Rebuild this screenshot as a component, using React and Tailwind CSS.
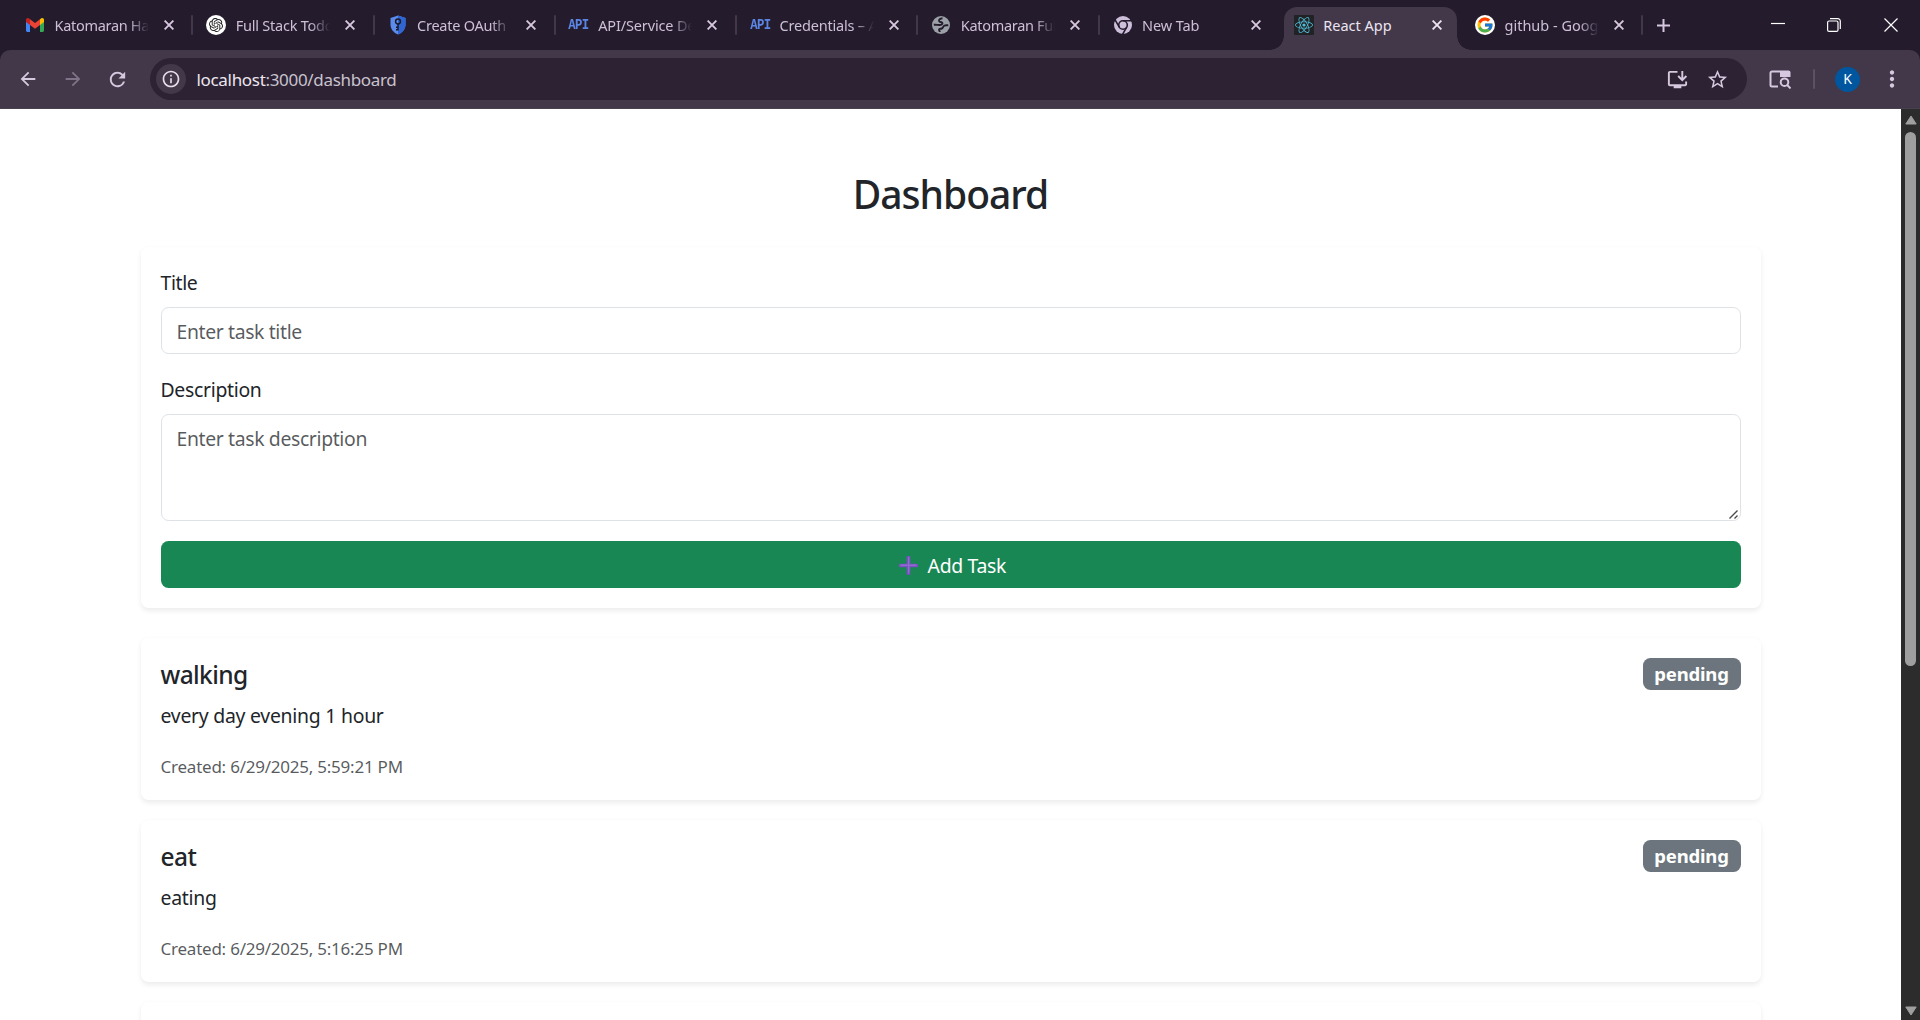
import { FaReact } from 'react-icons/fa';
import { FcGoogle } from 'react-icons/fc';
import {
  MdArrowBack,
  MdArrowForward,
  MdInfoOutline,
  MdInstallDesktop,
  MdMoreVert,
  MdRefresh,
  MdStarOutline,
} from 'react-icons/md';
import { SiOpenai } from 'react-icons/si';

function GmailIcon() {
  return (
    <svg viewBox="0 0 18 14" className="h-[14px] w-[18px]">
      <path d="M0 2v10.6C0 13.4.6 14 1.3 14H4V4.5z" fill="#4285f4" />
      <path d="M18 2v10.6c0 .8-.6 1.4-1.3 1.4H14V4.5z" fill="#34a853" />
      <path d="M14 1.3V7l4-3V1.9C18 .2 16.3-.5 15 .5z" fill="#fbbc04" />
      <path d="M4 7V1.3L9 5l5-3.7V7L9 10.8z" fill="#ea4335" />
      <path d="M0 1.9V4l4 3V1.3L3 .5C1.700-.5 0 .2 0 1.900z" fill="#c5221f" />
    </svg>
  );
}

function OpenAiIcon() {
  return (
    <span className="flex size-5 items-center justify-center rounded-full bg-white">
      <SiOpenai className="size-[14px] text-[#1c1c1c]" />
    </span>
  );
}

function ShieldIcon() {
  return (
    <svg viewBox="0 0 16 20" className="h-5 w-4">
      <path d="M8 .5 15.500 3v6.500c0 4.700-3.200 8.400-7.500 10C3.700 17.900.5 14.200.5 9.500V3z" fill="#5b8cec" />
      <path d="M8 .5 15.500 3v6.500c0 4.700-3.200 8.400-7.500 10z" fill="#2f66d3" />
      <circle cx="8" cy="6.500" r="2.400" fill="none" stroke="#1b1b2b" strokeWidth="1.500" />
      <path d="M8 9v6.500M8 12.200h-2M8 14.800h-2" stroke="#1b1b2b" strokeWidth="1.500" fill="none" />
    </svg>
  );
}

function ApiIcon() {
  return (
    <span className="mt-[2px] scale-x-[0.82] font-['Liberation_Mono',monospace] text-[15px] leading-5 font-bold tracking-[-0.8px] text-[#5b86e5]">
      API
    </span>
  );
}

function GlobeIcon() {
  return (
    <svg viewBox="0 0 18 18" className="size-[18px]">
      <circle cx="9" cy="9" r="9" fill="#9aa0a6" />
      <path
        d="M10.500 2.200C8 2.600 6.500 3.800 7.200 5.200c.6 1.100 2.800.6 3.200 1.900.4 1.300-1.300 1.900-2.800 1.900-2 0-4-.5-5.800-.2M16.300 9.300c-1.500.1-2.900-.3-4.100.4-1.300.8-1 2.300-2.400 2.800-1.300.5-2.300.1-2.700 1-.4.900.8 1.300.7 2.500"
        fill="none"
        stroke="#241b2d"
        strokeWidth="1.900"
      />
    </svg>
  );
}

function ChromeIcon() {
  return (
    <svg viewBox="0 0 18 18" className="size-[18px]">
      <circle cx="9" cy="9" r="9" fill="#cdbfd9" />
      <circle cx="9" cy="9" r="4.300" fill="none" stroke="#241b2d" strokeWidth="1.600" />
      <path d="M9 4.700h9M5.300 11.200.8 3.400M12.700 11.200 8.200 19" stroke="#241b2d" strokeWidth="1.600" />
    </svg>
  );
}

function ReactIcon() {
  return (
    <span className="flex size-5 items-center justify-center rounded-[1px] bg-[#212226]">
      <FaReact className="size-[18px] text-[#50bcd6]" />
    </span>
  );
}

function GoogleIcon() {
  return (
    <span className="flex size-5 items-center justify-center rounded-full bg-white">
      <FcGoogle className="size-[18px]" />
    </span>
  );
}

const tabs = [
  { title: 'Katomaran Ha', icon: GmailIcon, tracking: 'tracking-[-0.3px]' },
  { title: 'Full Stack Todo', icon: OpenAiIcon, tracking: 'tracking-[-0.23px]' },
  { title: 'Create OAuth', icon: ShieldIcon, tracking: 'tracking-[-0.23px]' },
  { title: 'API/Service De', icon: ApiIcon, tracking: 'tracking-[-0.15px]' },
  { title: 'Credentials – A', icon: ApiIcon, tracking: 'tracking-[-0.2px]' },
  { title: 'Katomaran Ful', icon: GlobeIcon, tracking: 'tracking-[-0.3px]' },
  { title: 'New Tab', icon: ChromeIcon, tracking: 'tracking-[-0.1px]', divider: false },
  { title: 'React App', icon: ReactIcon, tracking: 'tracking-[0px]', divider: false, active: true },
  { title: 'github - Goog', icon: GoogleIcon, tracking: 'tracking-[0px]' },
];

function Tab({ title, icon: Icon, tracking, divider = true, active = false }) {
  return (
    <div className="relative flex h-[50px] w-[181.25px] shrink-0 items-center">
      {active && (
        <div className="absolute top-[7px] right-[4px] bottom-0 left-[4.5px] rounded-t-[13px] bg-[#42384a]">
          <div className="absolute bottom-0 -left-[14px] size-[14px] bg-[radial-gradient(circle_at_0_0,transparent_13.5px,#42384a_14px)]" />
          <div className="absolute -right-[14px] bottom-0 size-[14px] bg-[radial-gradient(circle_at_100%_0,transparent_13.5px,#42384a_14px)]" />
        </div>
      )}
      <div className="relative ml-[14px] flex w-5 justify-center">
        <Icon />
      </div>
      <div
        className={`relative ml-[9.500px] w-[94px] overflow-hidden text-[14.5px] leading-5 whitespace-nowrap mask-[linear-gradient(to_right,black_74px,transparent_94px)] ${tracking} ${active ? 'mask-none text-[#ece4f0]' : 'text-[#cdbfd6]'}`}
      >
        {title}
      </div>
      <svg viewBox="0 0 10 10" className="relative ml-[15px] size-[10px]">
        <path d="M.6.6 9.400 9.400M9.400.6.6 9.400" stroke={active ? '#ece4f0' : '#d6c8de'} strokeWidth="1.900" />
      </svg>
      {divider && <div className="mr-[-1px] ml-auto h-5 w-[2px] rounded-full bg-[#42384a]" />}
    </div>
  );
}

function TabStrip() {
  return (
    <div className="flex h-[50px] items-center pl-[11px] font-['Noto_Sans',sans-serif]">
      {tabs.map((tab, i) => (
        <Tab key={i} {...tab} />
      ))}
      <svg viewBox="0 0 13 13" className="ml-[14.500px] size-[13px]">
        <path d="M6.500 0v13M0 6.500h13" stroke="#d6c8de" strokeWidth="2" />
      </svg>
      <div className="ml-auto flex h-full items-center text-white">
        <div className="flex w-14 justify-center">
          <svg viewBox="0 0 14 14" className="size-[14px]">
            <path d="M0 5.500h14" stroke="currentColor" strokeWidth="1.200" />
          </svg>
        </div>
        <div className="flex w-14 justify-center">
          <svg viewBox="0 0 14 14" className="size-[14px]" fill="none" stroke="currentColor">
            <rect x=".6" y="3" width="10.400" height="10.400" rx="1.500" strokeWidth="1.200" />
            <path d="M3 .7h7.800a2.500 2.500 0 0 1 2.500 2.500V11" strokeWidth="1.200" />
          </svg>
        </div>
        <div className="flex w-[58px] justify-center">
          <svg viewBox="0 0 14 14" className="size-[14px]">
            <path d="M.5.5l13 13M13.500.5l-13 13" stroke="currentColor" strokeWidth="1.200" />
          </svg>
        </div>
      </div>
    </div>
  );
}

function Toolbar() {
  return (
    <div className="flex h-[59px] items-center rounded-t-[10px] border-b border-[#4a4150] bg-[#42384a] pl-[5px] font-['Noto_Sans',sans-serif] text-[#d6c8de]">
      <div className="flex w-[45px] justify-center">
        <MdArrowBack className="size-[22px]" />
      </div>
      <div className="flex w-[45px] justify-center">
        <MdArrowForward className="size-[22px] text-[#7f7388]" />
      </div>
      <div className="flex w-[45px] justify-center">
        <MdRefresh className="size-[23px]" />
      </div>
      <div className="ml-[10px] flex h-[42px] w-[1597px] items-center rounded-full bg-[#2c2233] pl-[6px]">
        <div className="flex size-[30px] items-center justify-center rounded-full bg-[#42384a]">
          <MdInfoOutline className="size-5 text-[#e6dfea]" />
        </div>
        <div className="mt-[2px] ml-[10.500px] text-[17px] leading-6 tracking-[-0.32px] text-[#c9c2ce]">
          <span className="text-[#ece6ef]">localhost</span>:3000/dashboard
        </div>
        <MdInstallDesktop className="ml-auto size-[23px]" />
        <MdStarOutline className="mr-[18.500px] ml-[17px] size-[23px]" />
      </div>
      <div className="flex w-[66px] justify-center">
        <svg viewBox="0 0 22 19" className="h-[19px] w-[22px]" fill="none" stroke="currentColor" strokeWidth="2">
          <path d="M9 16.500H3A1.500 1.500 0 0 1 1.500 15V3A1.500 1.500 0 0 1 3 1.500h8" />
          <path d="M11 .5h8.500a2 2 0 0 1 2 2V7H11z" fill="currentColor" stroke="none" />
          <circle cx="15.500" cy="12.200" r="3.800" />
          <path d="m18.200 15 3.400 3.400" />
        </svg>
      </div>
      <div className="h-5 w-[2px] rounded-full bg-[#5b5064]" />
      <div className="flex w-[65px] justify-center">
        <div className="flex size-[25px] items-center justify-center rounded-full bg-[#00579f] text-[14px] leading-none text-white">
          K
        </div>
      </div>
      <div className="flex w-6 justify-center">
        <MdMoreVert className="size-[26px] shrink-0" />
      </div>
    </div>
  );
}

function Card({ className = '', children }) {
  return (
    <section className={`rounded-[7.500px] bg-white p-5 shadow-[0_2.500px_5px_rgba(0,0,0,0.075)] ${className}`}>
      {children}
    </section>
  );
}

function TaskForm() {
  return (
    <Card className="h-[361px]">
      <label className="block h-[30px] leading-[31px]">
        <span className="tracking-[-0.38px]">Title</span>
      </label>
      <input
        type="text"
        placeholder="Enter task title"
        className="mt-[10px] block h-[47px] w-full rounded-[7.500px] border border-[#dee2e6] px-[15px] pt-[2px] tracking-[-0.37px] placeholder:text-[#212529bf]"
      />
      <label className="mt-5 block h-[30px] leading-[31px] tracking-[-0.3px]">Description</label>
      <div className="relative mt-[10px]">
        <textarea
          placeholder="Enter task description"
          className="block h-[107px] w-full resize-none rounded-[7.500px] border border-[#dee2e6] px-[15px] py-[8.500px] leading-[30px] tracking-[-0.36px] placeholder:text-[#212529bf]"
        />
        <svg viewBox="0 0 9 9" className="absolute right-[3px] bottom-[2px] size-[9px]">
          <path d="M.5 8.500l8-8M5.500 8.500l3-3" stroke="#4a4a4a" strokeWidth="1.400" strokeDasharray="none" />
        </svg>
      </div>
      <button className="mt-5 flex h-[47px] w-full items-center justify-center rounded-[7.500px] bg-[#198754] pt-[2px] pl-1 text-white">
        <svg viewBox="0 0 19 19" className="size-[19px]">
          <path d="M9.500 1.500v16M1.500 9.500h16" stroke="#7b4fc4" strokeWidth="3.600" strokeLinecap="round" />
          <path d="M9.700 1.800v15M1.800 9.200h15" stroke="#8f6bd0" strokeWidth="1.400" strokeLinecap="round" />
        </svg>
        <span className="ml-[9.500px] pt-px tracking-[-0.34px]">Add Task</span>
      </button>
    </Card>
  );
}

const tasks = [
  { title: 'walking', description: 'every day evening 1 hour', created: '6/29/2025, 5:59:21 PM', status: 'pending' },
  { title: 'eat', description: 'eating', created: '6/29/2025, 5:16:25 PM', status: 'pending' },
];

function TaskCard({ title, description, created, status }) {
  return (
    <Card className="h-[162px]">
      <div className="flex h-8 items-end justify-between">
        <h5 className="text-[24.5px] leading-[30px] font-[550] tracking-[-0.6px]">{title}</h5>
        <span className="flex h-8 w-[98px] items-center justify-center rounded-[7.500px] bg-[#6c757d] text-[18.5px] leading-none font-bold tracking-[-0.2px] text-white">
          {status}
        </span>
      </div>
      <p className="mt-[10px] h-[30px] leading-[31px] tracking-[-0.25px]">{description}</p>
      <p className="mt-5 h-[30px] text-[17px] leading-[33px] tracking-[-0.23px] text-[#212529bf]">Created: {created}</p>
    </Card>
  );
}

function Scrollbar() {
  return (
    <div className="flex w-[19px] shrink-0 flex-col items-center bg-[#2c2c2c] pt-[6px] pb-[4px] text-[#9f9f9f]">
      <svg viewBox="0 0 12 10" className="h-[10px] w-3 shrink-0">
        <path d="M6 1 11.200 9H.8z" fill="currentColor" stroke="currentColor" strokeLinejoin="round" />
      </svg>
      <div className="mt-[7px] h-[534px] w-[11px] shrink-0 rounded-full bg-[#9f9f9f]" />
      <svg viewBox="0 0 12 10" className="mt-auto h-[10px] w-3 shrink-0">
        <path d="M6 9 11.200 1H.8z" fill="currentColor" stroke="currentColor" strokeLinejoin="round" />
      </svg>
    </div>
  );
}

export default function App() {
  return (
    <div className="flex h-[1020px] w-[1920px] flex-col overflow-hidden bg-[#241b2d]">
      <TabStrip />
      <Toolbar />
      <div className="flex h-[911px] bg-white">
        <main className="h-full flex-1 overflow-hidden pt-[60px] font-['Noto_Sans',sans-serif] text-[19.4px] text-[#212529]">
          <div className="mx-auto w-[1620px]">
            <h2 className="h-12 text-center text-[39px] leading-[50px] font-[550] tracking-[-1px]">Dashboard</h2>
            <div className="mt-[30px]">
              <TaskForm />
            </div>
            <div className="mt-[30px] flex flex-col gap-5">
              {tasks.map((task) => (
                <TaskCard key={task.created} {...task} />
              ))}
              <Card className="h-[162px]" />
            </div>
          </div>
        </main>
        <Scrollbar />
      </div>
    </div>
  );
}
